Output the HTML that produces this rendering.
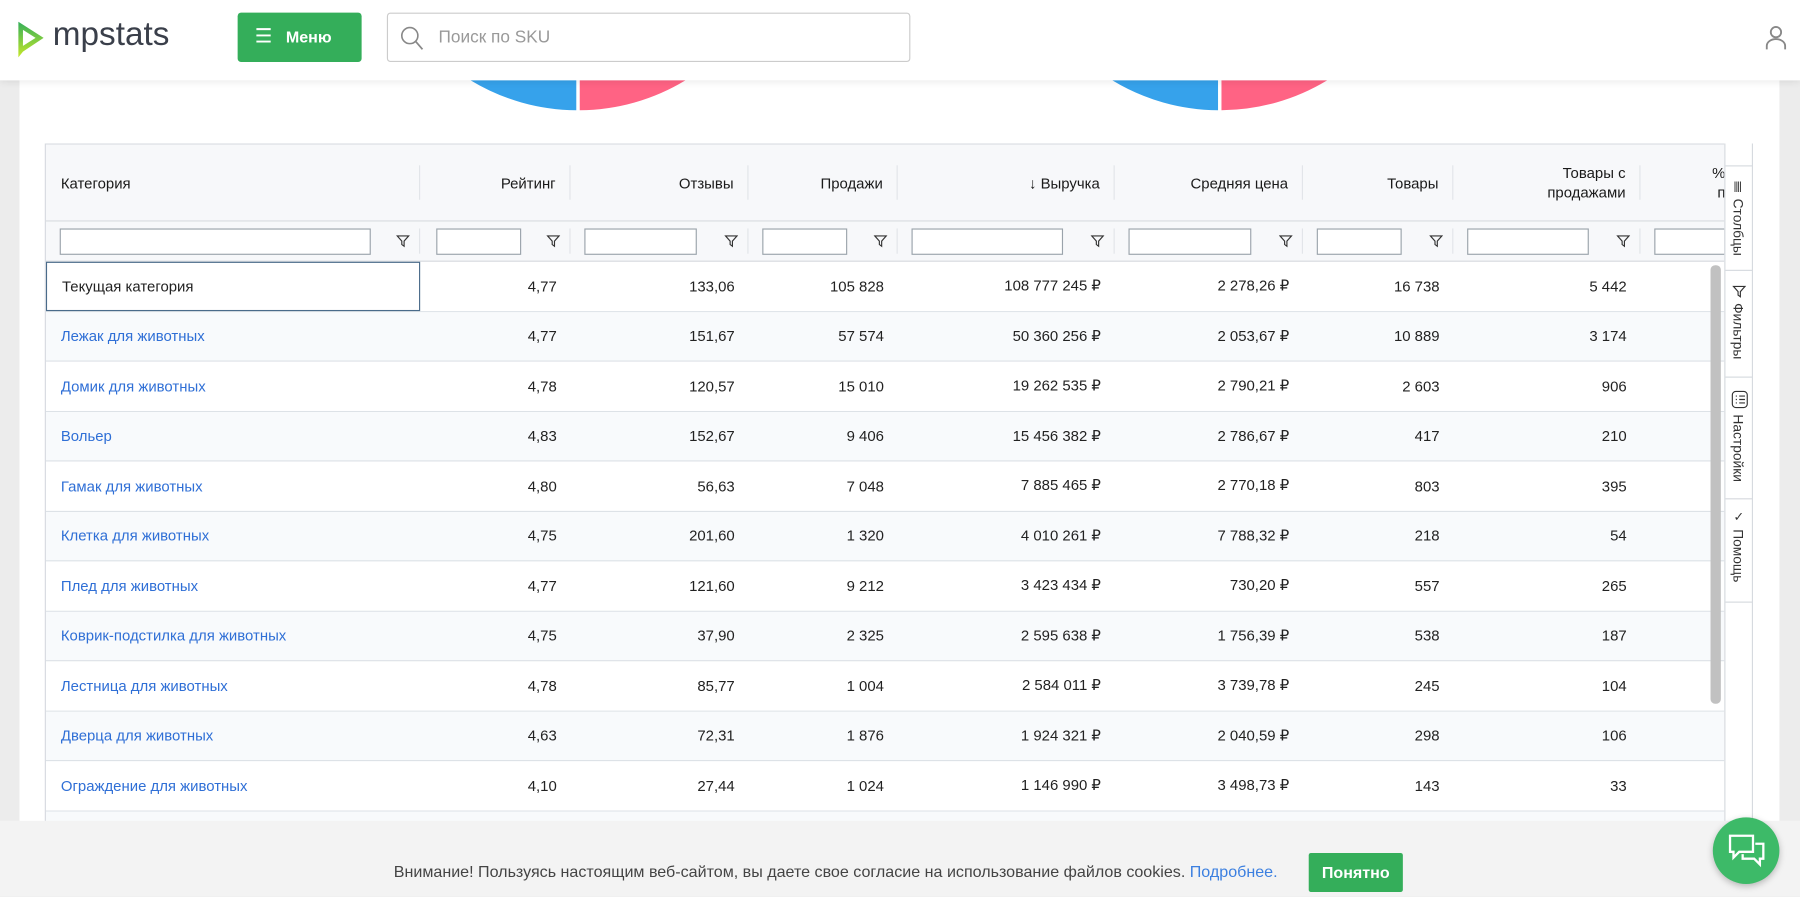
<!DOCTYPE html>
<html><head><meta charset="utf-8"><style>
*{box-sizing:border-box;margin:0;padding:0}
html,body{width:1800px;height:897px;overflow:hidden;background:#ececec}
#s{position:absolute;left:0;top:0;width:1568px;height:781px;transform:scale(1.148);transform-origin:0 0;font-family:"Liberation Sans","DejaVu Sans",sans-serif;font-size:13px;color:#222;background:#ececec;overflow:hidden}
.abs{position:absolute}
#panel{left:17px;top:0;width:1533px;height:781px;background:#fff}
#hdr{left:0;top:0;width:1568px;height:70px;background:#fff;box-shadow:0 2px 6px rgba(0,0,0,.08);z-index:5}
#menu{left:207px;top:11px;width:108px;height:43px;background:#34ae5a;border-radius:3px;color:#fff;font-weight:bold;font-size:14px}
#search{left:337px;top:11px;width:456px;height:43px;border:1px solid #ccc;border-radius:3px;background:#fff;color:#999;font-size:15px}
#tbl{left:39px;top:125px;width:1488px;height:600px;border:1px solid #d6dadf;background:#fff;overflow:hidden}
.row{position:absolute;left:0;width:1462px;height:43.5px;border-bottom:1px solid #dde2e7;display:flex;align-items:center}
.row.alt{background:#f8fafc}
.c{flex:none;text-align:right;padding-right:12px;white-space:nowrap}
.c:first-child{text-align:left;padding-left:13px;color:#2f6fd6}
.w0{width:326px}.w1{width:131px}.w2{width:155px}.w3{width:130px}.w4{width:189px}.w5{width:164px}.w6{width:131px}.w7{width:163px}.w8{width:74px}
.hd{position:absolute;left:0;top:0;width:1462px;height:67px;background:#f7f8fa;border-bottom:1px solid #d6dadf;display:flex;align-items:center;color:#1a1a1a}
.hd .c{height:30px;display:flex;align-items:center;justify-content:flex-end;border-right:1px solid #e2e5e9}
.hd .c:first-child{justify-content:flex-start;color:#1a1a1a}
.fl{position:absolute;left:0;top:67px;width:1462px;height:35px;background:#f7f8fa;border-bottom:1px solid #d6dadf;display:flex;align-items:center}
.fl .c{display:flex;align-items:center;justify-content:space-between;padding:0 8px 0 12px;border-right:1px solid #e2e5e9;height:22px}
.inp{height:23px;border:1px solid #9aa3ab;background:#fff}
.fi{width:12px;height:12px}
#side{left:1502px;top:125px;width:25px;height:600px;background:#fff;border-left:1px solid #d6dadf;border-right:1px solid #d6dadf;z-index:3}
.tab{position:absolute;left:0;width:24px;border-bottom:1px solid #d6dadf;font-size:12px;color:#333}
.vt{position:absolute;left:4px;writing-mode:vertical-rl;white-space:nowrap}
#cookie{left:0;top:715px;width:1568px;height:66px;background:#f3f3f3;z-index:6;font-size:14px;color:#444}
</style></head><body><div id="s">
<div id="panel" class="abs"></div>
<svg class="abs" style="left:0;top:0" width="1568" height="100">
<path d="M502 -83 L502 96 A179 179 0 0 1 410 70 Z" fill="#36a2eb"/>
<path d="M505 -83 L505 96 A179 179 0 0 0 597 70 Z" fill="#ff6384"/>
<path d="M1061 -83 L1061 96 A179 179 0 0 1 969 70 Z" fill="#36a2eb"/>
<path d="M1064 -83 L1064 96 A179 179 0 0 0 1156 70 Z" fill="#ff6384"/>
</svg>
<div id="hdr" class="abs">
<svg class="abs" style="left:13px;top:17px" width="26" height="34" viewBox="0 0 26 34"><defs><linearGradient id="g" x1="0" y1="0" x2="0" y2="1"><stop offset="0" stop-color="#34ae5a"/><stop offset="1" stop-color="#c6e82a"/></linearGradient></defs><path d="M3 2 L25 16 L7 28 L3 33 Z M7 9 V23 L18 16 Z" fill="url(#g)" fill-rule="evenodd"/></svg>
<div class="abs" style="left:46px;top:14px;font-size:29px;color:#3a3f4a">mpstats</div>
<div id="menu" class="abs"><span class="abs" style="left:15px;top:11px;font-size:17px;font-weight:normal">☰</span><span class="abs" style="left:42px;top:13px">Меню</span></div>
<div id="search" class="abs"><svg class="abs" style="left:11px;top:11px" width="20" height="22"><circle cx="8" cy="8" r="7" fill="none" stroke="#888" stroke-width="1.4"/><path d="M13 13 L19 20" stroke="#888" stroke-width="1.5"/></svg><span class="abs" style="left:44px;top:12px">Поиск по SKU</span></div>
<svg class="abs" style="left:1537px;top:22px" width="20" height="22"><circle cx="10" cy="6" r="4.5" fill="none" stroke="#888" stroke-width="1.6"/><path d="M2 21 V18 A8 6 0 0 1 18 18 V21" fill="none" stroke="#888" stroke-width="1.6"/></svg>
</div>
<div id="tbl" class="abs">
<div class="hd"><div class="c w0">Категория</div><div class="c w1">Рейтинг</div><div class="c w2">Отзывы</div><div class="c w3">Продажи</div><div class="c w4">↓ Выручка</div><div class="c w5">Средняя цена</div><div class="c w6">Товары</div><div class="c w7" style="text-align:right;line-height:17px">Товары с<br>продажами</div><div class="c w8" style="border:none;padding-right:0;justify-content:flex-end;line-height:17px;text-align:right">%<br>п</div></div>
<div class="fl">
<div class="c w0"><div class="inp" style="width:271px"></div><svg class="fi" viewBox="0 0 12 12"><path d="M1 1.5 H11 L7 6 V10.5 L5 9 V6 Z" fill="none" stroke="#333"/></svg></div>
<div class="c w1"><div class="inp" style="width:74px;margin-left:2px"></div><svg class="fi" viewBox="0 0 12 12"><path d="M1 1.5 H11 L7 6 V10.5 L5 9 V6 Z" fill="none" stroke="#333"/></svg></div>
<div class="c w2"><div class="inp" style="width:98px"></div><svg class="fi" viewBox="0 0 12 12"><path d="M1 1.5 H11 L7 6 V10.5 L5 9 V6 Z" fill="none" stroke="#333"/></svg></div>
<div class="c w3"><div class="inp" style="width:74px"></div><svg class="fi" viewBox="0 0 12 12"><path d="M1 1.5 H11 L7 6 V10.5 L5 9 V6 Z" fill="none" stroke="#333"/></svg></div>
<div class="c w4"><div class="inp" style="width:132px"></div><svg class="fi" viewBox="0 0 12 12"><path d="M1 1.5 H11 L7 6 V10.5 L5 9 V6 Z" fill="none" stroke="#333"/></svg></div>
<div class="c w5"><div class="inp" style="width:107px"></div><svg class="fi" viewBox="0 0 12 12"><path d="M1 1.5 H11 L7 6 V10.5 L5 9 V6 Z" fill="none" stroke="#333"/></svg></div>
<div class="c w6"><div class="inp" style="width:74px"></div><svg class="fi" viewBox="0 0 12 12"><path d="M1 1.5 H11 L7 6 V10.5 L5 9 V6 Z" fill="none" stroke="#333"/></svg></div>
<div class="c w7"><div class="inp" style="width:106px"></div><svg class="fi" viewBox="0 0 12 12"><path d="M1 1.5 H11 L7 6 V10.5 L5 9 V6 Z" fill="none" stroke="#333"/></svg></div>
<div class="c w8" style="border:none;padding-right:0"><div class="inp" style="width:80px"></div></div>
</div>
<div class="row" style="top:102px"><div class="c w0" style="color:#222;border:1px solid #4a6b8a;height:43.5px;line-height:41px">Текущая категория</div><div class="c w1">4,77</div><div class="c w2">133,06</div><div class="c w3">105 828</div><div class="c w4">108 777 245 ₽</div><div class="c w5">2 278,26 ₽</div><div class="c w6">16 738</div><div class="c w7">5 442</div></div>
<div class="row alt" style="top:145.5px"><div class="c w0">Лежак для животных</div><div class="c w1">4,77</div><div class="c w2">151,67</div><div class="c w3">57 574</div><div class="c w4">50 360 256 ₽</div><div class="c w5">2 053,67 ₽</div><div class="c w6">10 889</div><div class="c w7">3 174</div></div>
<div class="row" style="top:189px"><div class="c w0">Домик для животных</div><div class="c w1">4,78</div><div class="c w2">120,57</div><div class="c w3">15 010</div><div class="c w4">19 262 535 ₽</div><div class="c w5">2 790,21 ₽</div><div class="c w6">2 603</div><div class="c w7">906</div></div>
<div class="row alt" style="top:232.5px"><div class="c w0">Вольер</div><div class="c w1">4,83</div><div class="c w2">152,67</div><div class="c w3">9 406</div><div class="c w4">15 456 382 ₽</div><div class="c w5">2 786,67 ₽</div><div class="c w6">417</div><div class="c w7">210</div></div>
<div class="row" style="top:276px"><div class="c w0">Гамак для животных</div><div class="c w1">4,80</div><div class="c w2">56,63</div><div class="c w3">7 048</div><div class="c w4">7 885 465 ₽</div><div class="c w5">2 770,18 ₽</div><div class="c w6">803</div><div class="c w7">395</div></div>
<div class="row alt" style="top:319.5px"><div class="c w0">Клетка для животных</div><div class="c w1">4,75</div><div class="c w2">201,60</div><div class="c w3">1 320</div><div class="c w4">4 010 261 ₽</div><div class="c w5">7 788,32 ₽</div><div class="c w6">218</div><div class="c w7">54</div></div>
<div class="row" style="top:363px"><div class="c w0">Плед для животных</div><div class="c w1">4,77</div><div class="c w2">121,60</div><div class="c w3">9 212</div><div class="c w4">3 423 434 ₽</div><div class="c w5">730,20 ₽</div><div class="c w6">557</div><div class="c w7">265</div></div>
<div class="row alt" style="top:406.5px"><div class="c w0">Коврик-подстилка для животных</div><div class="c w1">4,75</div><div class="c w2">37,90</div><div class="c w3">2 325</div><div class="c w4">2 595 638 ₽</div><div class="c w5">1 756,39 ₽</div><div class="c w6">538</div><div class="c w7">187</div></div>
<div class="row" style="top:450px"><div class="c w0">Лестница для животных</div><div class="c w1">4,78</div><div class="c w2">85,77</div><div class="c w3">1 004</div><div class="c w4">2 584 011 ₽</div><div class="c w5">3 739,78 ₽</div><div class="c w6">245</div><div class="c w7">104</div></div>
<div class="row alt" style="top:493.5px"><div class="c w0">Дверца для животных</div><div class="c w1">4,63</div><div class="c w2">72,31</div><div class="c w3">1 876</div><div class="c w4">1 924 321 ₽</div><div class="c w5">2 040,59 ₽</div><div class="c w6">298</div><div class="c w7">106</div></div>
<div class="row" style="top:537px"><div class="c w0">Ограждение для животных</div><div class="c w1">4,10</div><div class="c w2">27,44</div><div class="c w3">1 024</div><div class="c w4">1 146 990 ₽</div><div class="c w5">3 498,73 ₽</div><div class="c w6">143</div><div class="c w7">33</div></div>
<div class="row alt" style="top:580.5px"></div>
<div class="abs" style="left:1450px;top:105px;width:9px;height:382px;background:#c1c1c1;border-radius:4px"></div>
</div>
<div id="side" class="abs">
<div class="tab" style="top:0;height:20px"></div>
<div class="tab" style="top:20px;height:91px"><div class="abs" style="left:7px;top:12px;font-size:10px;letter-spacing:-1px">||||</div><div class="vt" style="top:28px">Столбцы</div></div>
<div class="tab" style="top:111px;height:93px"><svg class="abs" style="left:6px;top:12px" width="12" height="12"><path d="M1 1.5 H11 L7 6 V10.5 L5 9 V6 Z" fill="none" stroke="#333"/></svg><div class="vt" style="top:28px">Фильтры</div></div>
<div class="tab" style="top:204px;height:106px"><svg class="abs" style="left:5px;top:11px" width="15" height="16"><rect x="1" y="1" width="13" height="14" rx="3" fill="none" stroke="#333"/><path d="M4 5h1M7 5h5M4 8h1M7 8h5M4 11h1M7 11h5" stroke="#333"/></svg><div class="vt" style="top:32px">Настройки</div></div>
<div class="tab" style="top:310px;height:90px"><div class="abs" style="left:7px;top:9px;font-size:11px">✓</div><div class="vt" style="top:26px">Помощь</div></div>
</div>
<div id="cookie" class="abs"><div class="abs" style="left:343px;top:36px">Внимание! Пользуясь настоящим веб-сайтом, вы даете свое согласие на использование файлов cookies. <span style="color:#3b7fe0">Подробнее.</span></div>
<div class="abs" style="left:1140px;top:28px;width:82px;height:34px;background:#34ae5a;border-radius:2px;color:#fff;font-weight:bold;text-align:center;line-height:34px">Понятно</div></div>
<div class="abs" style="left:1492px;top:712px;width:58px;height:58px;border-radius:50%;background:#3dba68;z-index:7;box-shadow:0 2px 6px rgba(0,0,0,.25)"><svg class="abs" style="left:13px;top:14px" width="34" height="32"><path d="M2 2 H22 V16 H10 L5 21 V16 H2 Z" fill="none" stroke="#fff" stroke-width="2"/><path d="M24 9 H31 V22 H28 V27 L23 22 H13 V18" fill="none" stroke="#fff" stroke-width="2"/></svg></div>
</div></body></html>
